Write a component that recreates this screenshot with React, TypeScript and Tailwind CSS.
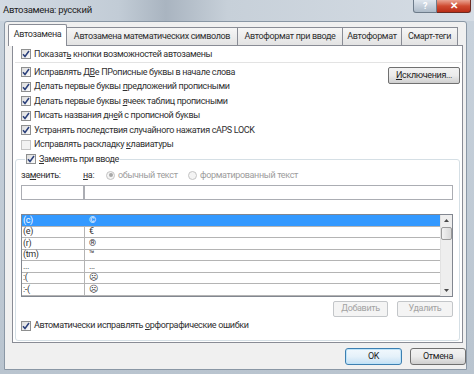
import React from "react";

function Check({ checked = true, disabled = false }: { checked?: boolean; disabled?: boolean }) {
  return (
    <span
      className={`inline-flex items-center justify-center w-[10px] h-[10px] shrink-0 border ${
        disabled ? "border-[#c4c4c4] bg-[#f2f2f2]" : "border-[#8e8f8f] bg-gradient-to-br from-[#dcdcdc] to-[#fbfbfb]"
      }`}
    >
      {checked && (
        <svg width="8" height="8" viewBox="0 0 8 8">
          <path d="M1 4.2 L3 6.5 L7 1" fill="none" stroke="#2a3f7a" strokeWidth="1.5" />
        </svg>
      )}
    </span>
  );
}

function Row({ children, checked = true, disabled = false }: { children: React.ReactNode; checked?: boolean; disabled?: boolean }) {
  return (
    <div className="h-[14.5px] flex items-center gap-[3px] pl-[8px]">
      <Check checked={checked} disabled={disabled} />
      <span className="whitespace-nowrap leading-none">{children}</span>
    </div>
  );
}

function Radio({ on }: { on?: boolean }) {
  return (
    <span className="inline-flex items-center justify-center w-[9px] h-[9px] shrink-0 rounded-full border border-[#c4c4c4] bg-[#f4f4f4]">
      {on && <span className="w-[4px] h-[4px] rounded-full bg-[#a8a8a8]" />}
    </span>
  );
}

const rows: [string, string][] = [
  ["(c)", "©"],
  ["(e)", "€"],
  ["(r)", "®"],
  ["(tm)", "™"],
  ["...", "…"],
  [":(", "☹"],
  [":-(", "☹"],
];

export default function App() {
  return (
    <div className="w-[474px] h-[374px] bg-gradient-to-b from-[#c9d3dd] to-[#b9c4cf] flex flex-col text-[9px] tracking-[-0.35px] text-[#303030] font-['Roboto',sans-serif] overflow-hidden">
      {/* title bar */}
      <div className="h-[21px] flex items-start justify-between bg-[linear-gradient(90deg,#d3dbe3_0%,#c2ccd6_25%,#a9b4c0_35%,#c7d0d9_48%,#d6dde5_100%)]">
        <div className="pl-[3px] pt-[5px] text-[9.5px] tracking-[-0.3px] text-[#1c1c1c] leading-none whitespace-nowrap">Автозамена: русский</div>
        <div className="flex mr-[3px]">
          <div className="w-[24px] h-[13px] rounded-bl-[3px] border border-t-0 border-[#6d7b8a] bg-gradient-to-b from-[#dfe6ee] to-[#aebbc9] flex items-center justify-center text-[9px] font-bold text-white leading-none">
            ?
          </div>
          <div className="w-[34px] h-[13px] rounded-br-[3px] border border-t-0 border-l-0 border-[#6b2a22] bg-gradient-to-b from-[#e8a493] via-[#cf4b31] to-[#b92c16] flex items-center justify-center text-[10px] font-bold text-white leading-none">
            ✕
          </div>
        </div>
      </div>

      {/* client area */}
      <div className="flex-1 ml-[4px] mr-[7px] mb-[4px] bg-[#f0f0f0] border border-[#8a97a5] rounded-t-[3px] flex flex-col pl-[7px] pr-[0px] pt-[2px]">
        {/* tabs */}
        <div className="h-[21px] flex items-end mr-[3px] relative z-10">
          <div className="ml-[-4px] w-[59px] h-[22px] -mb-[1px] bg-white border border-b-0 border-[#898c95] rounded-t-[2px] flex justify-center items-start pt-[5px] whitespace-nowrap leading-none">
            Автозамена
          </div>
          {[
            ["Автозамена математических символов", "w-[171px]"],
            ["Автоформат при вводе", "w-[105px]"],
            ["Автоформат", "w-[59px]"],
            ["Смарт-теги", "w-[56px]"],
          ].map(([t, w]) => (
            <div
              key={t}
              className={`${w} h-[18px] border border-b-0 border-l-0 border-[#898c95] bg-gradient-to-b from-[#f6f6f6] to-[#e3e3e3] flex items-center justify-center whitespace-nowrap leading-none`}
            >
              {t}
            </div>
          ))}
        </div>

        {/* panel */}
        <div className="h-[298px] mr-[3px] bg-white border border-[#898c95] flex flex-col pr-[1px]">
          <div className="h-[14px] mt-[1px] flex items-center gap-[3px] pl-[8px]">
            <Check />
            <span className="whitespace-nowrap leading-none">
              Показат<u>ь</u> кнопки возможностей автозамены
            </span>
          </div>
          <div className="h-px mt-[1px] ml-[2px] bg-[#e3e3e3]" />
          <div className="mt-[2px] flex">
            <div className="flex-1 flex flex-col">
              <Row>
                Исправлять Д<u>В</u>е ПРописные буквы в начале слова
              </Row>
              <Row>
                Делать первые буквы <u>п</u>редложений прописными
              </Row>
              <Row>
                Делать первые буквы <u>я</u>чеек таблиц прописными
              </Row>
              <Row>
                Писать названия дн<u>е</u>й с прописной буквы
              </Row>
              <Row>
                Устранять после<u>д</u>ствия случайного нажатия cAPS LOCK
              </Row>
              <Row checked={false} disabled>
                Исправлять раскладку <u>к</u>лавиатуры
              </Row>
            </div>
            <div className="pt-[2px] pr-[1px]">
              <button className="w-[72px] h-[17px] rounded-[2px] border border-[#707070] bg-gradient-to-b from-[#f2f2f2] via-[#ebebeb] to-[#cfcfcf] text-[9px] leading-none text-[#1e1e1e]">
                <u>И</u>сключения...
              </button>
            </div>
          </div>

          <fieldset className="ml-[2px] mr-[1px] mb-[1px] flex-1 border border-[#d5dfe5] rounded-[3px] px-[5px] pb-0 min-w-0">
            <legend className="ml-[4px] px-[1px] h-[14px] flex items-center gap-[3px]">
              <Check />
              <span className="whitespace-nowrap leading-none">
                <u>З</u>аменять при вводе
              </span>
            </legend>
            <div className="h-[14px] mt-[2px] flex items-center whitespace-nowrap">
              <span className="w-[62px] leading-none">
                за<u>м</u>енить:
              </span>
              <span className="w-[23px] leading-none">
                <u>н</u>а:
              </span>
              <span className="flex items-center gap-[3px] text-[#9d9d9d] leading-none w-[82px]">
                <Radio on /> обычный текст
              </span>
              <span className="flex items-center gap-[3px] text-[#9d9d9d] leading-none">
                <Radio /> форматированный текст
              </span>
            </div>
            <div className="mt-[3px] flex mr-[1px]">
              <div className="w-[63px] h-[15px] border border-[#abadb3] bg-white" />
              <div className="flex-1 h-[15px] border border-[#abadb3] bg-white" />
            </div>

            {/* list */}
            <div className="mt-[14px] mr-[1px] border border-[#828790] flex">
              <div className="flex-1 flex flex-col">
                {rows.map(([a, b], i) => (
                  <div
                    key={i}
                    className={`h-[11.5px] flex leading-none border-b border-[#b4b4b4] ${
                      i === 0 ? "bg-[#3399ff] text-white" : ""
                    }`}
                  >
                    <div className={`w-[63px] pl-[1px] flex items-center border-r ${i === 0 ? "border-[#3399ff]" : "border-[#b4b4b4]"}`}>{a}</div>
                    <div className="flex-1 pl-[4px] flex items-center">{b}</div>
                  </div>
                ))}
              </div>
              <div className="w-[12px] bg-[#eeeeee] border-l border-[#e2e2e2] flex flex-col items-center">
                <div className="h-[11px] flex items-center justify-center">
                  <svg width="5" height="3" viewBox="0 0 5 3">
                    <path d="M0 3 L2.5 0 L5 3Z" fill="#4a4a4a" />
                  </svg>
                </div>
                <div className="mt-[1px] w-[11px] h-[13px] rounded-[2px] border border-[#9a9a9a] bg-gradient-to-r from-[#f2f2f2] to-[#d8d8d8]" />
                <div className="flex-1" />
                <div className="h-[10px] flex items-center justify-center">
                  <svg width="5" height="3" viewBox="0 0 5 3">
                    <path d="M0 0 L2.5 3 L5 0Z" fill="#4a4a4a" />
                  </svg>
                </div>
              </div>
            </div>

            <div className="mt-[4px] mr-[1px] flex justify-end gap-[9px]">
              <button className="w-[55px] h-[16px] rounded-[2px] border border-[#c3c6c9] bg-[#f4f4f4] text-[#a3a3a3] text-[9px] leading-none">
                Добавить
              </button>
              <button className="w-[56px] h-[16px] rounded-[2px] border border-[#c3c6c9] bg-[#f4f4f4] text-[#a3a3a3] text-[9px] leading-none">
                Удалить
              </button>
            </div>
            <div className="h-[14px] mt-[2px] flex items-center gap-[3px]">
              <Check />
              <span className="whitespace-nowrap leading-none">
                Автоматически исправлять <u>о</u>рфографические ошибки
              </span>
            </div>
          </fieldset>
        </div>

        {/* footer */}
        <div className="mt-[5px] flex justify-end gap-[8px] pr-[0px]">
          <button className="w-[57px] h-[17px] rounded-[3px] border border-[#3c7fb1] bg-gradient-to-b from-[#f1f8fd] via-[#e5f1fa] to-[#c4e0f4] shadow-[inset_0_0_0_1px_#bde3f9] text-[9px] leading-none text-[#1e1e1e]">
            OK
          </button>
          <button className="w-[56px] h-[17px] rounded-[3px] border border-[#707070] bg-gradient-to-b from-[#f2f2f2] via-[#ebebeb] to-[#cfcfcf] text-[9px] leading-none text-[#1e1e1e]">
            Отмена
          </button>
        </div>
      </div>
    </div>
  );
}
